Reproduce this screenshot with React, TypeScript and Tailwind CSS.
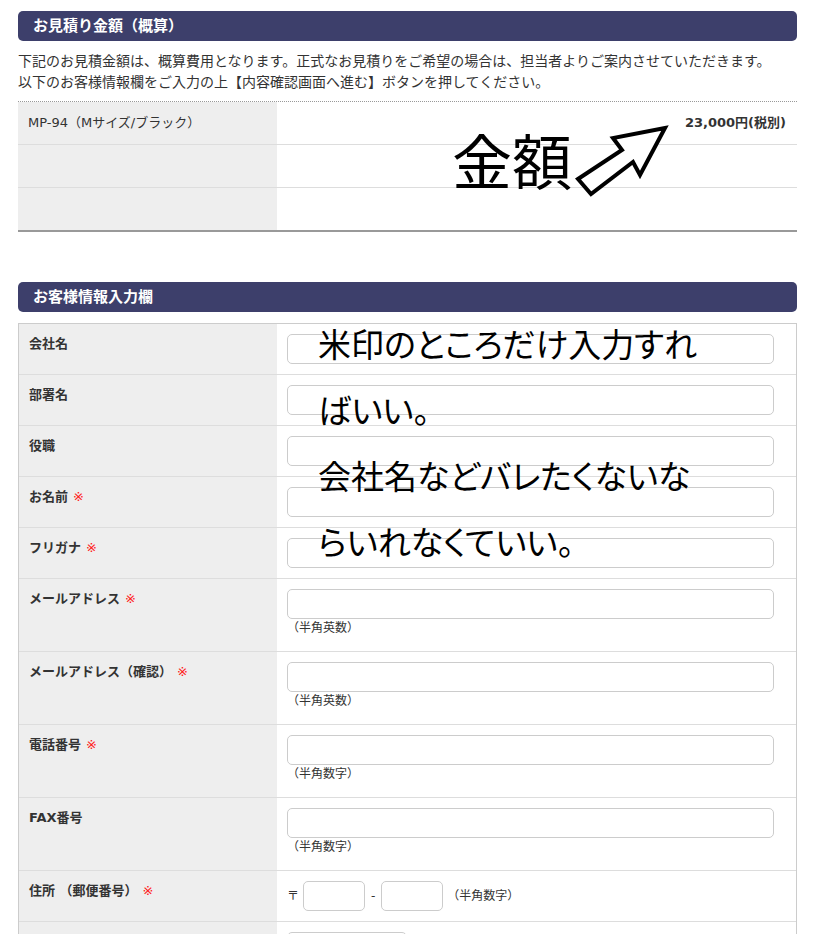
import React from 'react'

// Form row definition
interface FieldRow {
  label: string;
  required?: boolean;
  hint?: string;
}

const fields: FieldRow[] = [
  { label: "会社名" },
  { label: "部署名" },
  { label: "役職" },
  { label: "お名前", required: true },
  { label: "フリガナ", required: true },
  { label: "メールアドレス", required: true, hint: "（半角英数）" },
  { label: "メールアドレス（確認）", required: true, hint: "（半角英数）" },
  { label: "電話番号", required: true, hint: "（半角数字）" },
  { label: "FAX番号", hint: "（半角数字）" },
];

const SectionTitle: React.FC<{ children: React.ReactNode }> = ({ children }) => (
  <h2 className="h-[30px] rounded-[5px] bg-[#3d3f6b] pl-[15px] text-[15px] font-bold leading-[30px] text-white">
    {children}
  </h2>
);

const Required = () => <span className="ml-[5px] text-[13px] font-normal text-[#ff1a1a]">※</span>;

const TextInput: React.FC<{ className?: string }> = ({ className }) => (
  <input
    type="text"
    className={`block h-[30px] rounded-[5px] border border-[#cccccc] bg-white outline-none ${className ?? "w-[487px]"}`}
  />
);

export default function App() {
  return (
    <div
      className="relative min-h-[934px] bg-white text-[#333333]"
      style={{ fontFamily: '"DejaVu Sans", "Noto Sans CJK JP", sans-serif' }}
    >
      <div className="ml-[18px] w-[779px] pt-[11px]">
        {/* Estimate */}
        <SectionTitle>お見積り金額（概算）</SectionTitle>
        <p className="mt-[10px] text-[14px] leading-[21px]">
          下記のお見積金額は、概算費用となります。正式なお見積りをご希望の場合は、担当者よりご案内させていただきます。
          <br />
          以下のお客様情報欄をご入力の上【内容確認画面へ進む】ボタンを押してください。
        </p>
        <div className="mt-[8px] border-t border-dotted border-[#999999]">
          <div className="border-b-2 border-[#999999]">
            <div className="flex h-[43px] border-b border-[#dddddd]">
              <div className="w-[259px] bg-[#eeeeee] pl-[10px] text-[13px] leading-[41px]">MP-94（Mサイズ/ブラック）</div>
              <div className="flex-1 pr-[11px] text-right text-[13px] font-bold leading-[41px]">23,000円(税別)</div>
            </div>
            <div className="flex h-[43px] border-b border-[#dddddd]">
              <div className="w-[259px] bg-[#eeeeee]" />
              <div className="flex-1" />
            </div>
            <div className="flex h-[42px]">
              <div className="w-[259px] bg-[#eeeeee]" />
              <div className="flex-1" />
            </div>
          </div>
        </div>

        {/* Customer info */}
        <div className="mt-[50px]">
          <SectionTitle>お客様情報入力欄</SectionTitle>
        </div>
        <div className="mt-[11px] border border-[#cccccc]">
          {fields.map((f) => (
            <div key={f.label} className="flex border-b border-[#dddddd]">
              <div className="w-[258px] shrink-0 bg-[#eeeeee] pl-[10px] pt-[10px] text-[13px] font-bold leading-[20px]">
                {f.label}
                {f.required && <Required />}
              </div>
              <div className={`flex-1 pl-[10px] pt-[10px] ${f.hint ? "pb-[15px]" : "pb-[10px]"}`}>
                <TextInput />
                {f.hint && <div className="mt-[1px] text-[12px] leading-[16px]">{f.hint}</div>}
              </div>
            </div>
          ))}
          <div className="flex border-b border-[#dddddd]">
            <div className="w-[258px] shrink-0 bg-[#eeeeee] pl-[10px] pt-[10px] text-[13px] font-bold leading-[20px]">
              住所 （郵便番号）<Required />
            </div>
            <div className="flex flex-1 items-center pl-[10px] pt-[10px] pb-[10px] text-[12px]">
              <span className="mr-[4px]">〒</span>
              <TextInput className="w-[62px]" />
              <span className="mx-[6px]">-</span>
              <TextInput className="w-[62px]" />
              <span className="ml-[4px]">（半角数字）</span>
            </div>
          </div>
          <div className="flex">
            <div className="w-[258px] shrink-0 bg-[#eeeeee]" />
            <div className="flex-1 pl-[10px] pt-[10px] pb-[10px]">
              <TextInput className="w-[120px]" />
            </div>
          </div>
        </div>
      </div>

      {/* Hand-written annotations */}
      <div
        className="pointer-events-none absolute left-[452px] top-[129px] text-[60px] leading-none text-black"
        style={{ fontFamily: '"Noto Sans CJK JP", sans-serif' }}
      >
        金額
      </div>
      <svg className="pointer-events-none absolute left-0 top-0" width="824" height="240" viewBox="0 0 824 240">
        <polygon
          points="665,128 613,138 622,150 578,179 591,194 633,162 640,175"
          fill="white"
          stroke="black"
          strokeWidth="4"
          strokeLinejoin="miter"
        />
      </svg>
      <div
        className="pointer-events-none absolute left-[318px] top-[310px] text-[33px] leading-[66px] text-black [font-feature-settings:'palt']"
        style={{ fontFamily: '"Noto Sans CJK JP", sans-serif' }}
      >
        米印のところだけ入力すれ
        <br />
        ばいい。
        <br />
        会社名などバレたくないな
        <br />
        らいれなくていい。
      </div>
    </div>
  );
}
